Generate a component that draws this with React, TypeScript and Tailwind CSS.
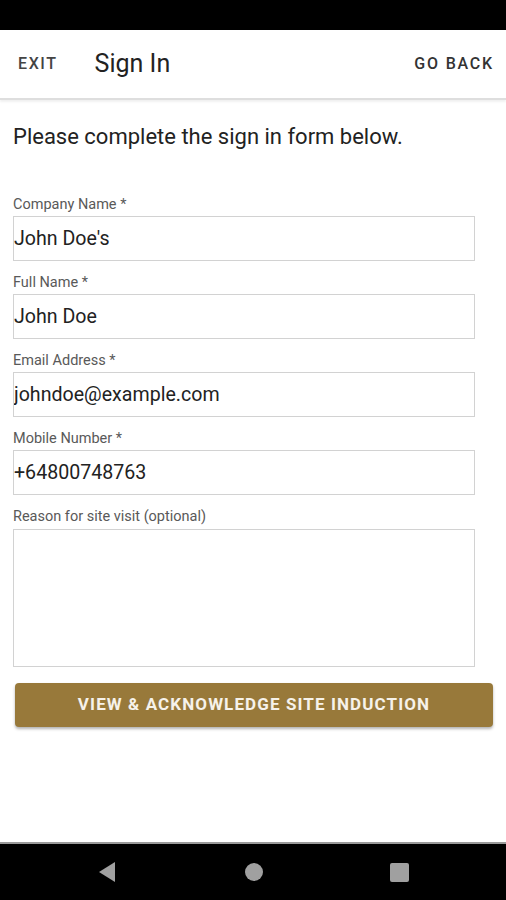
const fields = [
  { label: "Company Name *", value: "John Doe's" },
  { label: "Full Name *", value: "John Doe" },
  { label: "Email Address *", value: "johndoe@example.com" },
  { label: "Mobile Number *", value: "+64800748763" },
];

export default function App() {
  return (
    <div className="flex h-[900px] w-[506px] flex-col bg-white font-['Roboto',sans-serif]">
      {/* status bar */}
      <div className="h-[30px] bg-black" />

      {/* header */}
      <header className="flex h-[70px] items-center border-b-2 border-[#dedede] px-[18px] shadow-[0_2px_2px_rgba(0,0,0,0.06)]">
        <button className="text-[16px] font-medium tracking-[1.6px] text-[#444]">EXIT</button>
        <h1 className="ml-[37px] text-[25px] text-[#222]">Sign In</h1>
        <button className="ml-auto mr-[-6px] text-[16px] font-medium tracking-[1.8px] text-[#333]">
          GO BACK
        </button>
      </header>

      <main className="flex-1 px-[13px]">
        <p className="mt-[25px] text-[22px] leading-[24px] text-[#222]">
          Please complete the sign in form below.
        </p>

        <form className="mt-[46px] flex flex-col">
          {fields.map((f) => (
            <div key={f.label} className="mb-[12px] flex flex-col">
              <label className="mb-[3px] mt-[2px] h-[16px] text-[14.5px] leading-[16px] text-[#595959]">
                {f.label}
              </label>
              <input
                readOnly
                value={f.value}
                className="h-[45px] w-[462px] border-[1.5px] border-[#d2d2d2] bg-white px-0 text-[19.6px] text-[#222] outline-none"
              />
            </div>
          ))}
          <div className="flex flex-col">
            <label className="mb-[4px] mt-[2px] h-[16px] text-[14.5px] leading-[16px] text-[#595959]">
              Reason for site visit (optional)
            </label>
            <textarea className="h-[138px] w-[462px] resize-none border-[1.5px] border-[#d2d2d2] outline-none" />
          </div>
          <button
            type="button"
            className="ml-[2px] mt-[16px] h-[44px] w-[478px] rounded-[4px] bg-[#98793a] text-[17px] font-bold tracking-[1.1px] text-[#f6f2ea] shadow-[0_2px_3px_rgba(0,0,0,0.3)]"
          >
            VIEW &amp; ACKNOWLEDGE SITE INDUCTION
          </button>
        </form>
      </main>

      {/* nav bar */}
      <nav className="flex h-[58px] items-center border-t-2 border-[#9a9a9a] bg-black">
        <div className="flex w-full items-center">
          <svg width="20" height="22" viewBox="0 0 20 22" className="ml-[97px]">
            <path d="M18 1 L2 11 L18 21 Z" fill="#a0a0a0" />
          </svg>
          <div className="ml-[128px] h-[18px] w-[18px] rounded-full bg-[#a0a0a0]" />
          <div className="ml-[127px] h-[19px] w-[19px] rounded-[2px] bg-[#a0a0a0]" />
        </div>
      </nav>
    </div>
  );
}
